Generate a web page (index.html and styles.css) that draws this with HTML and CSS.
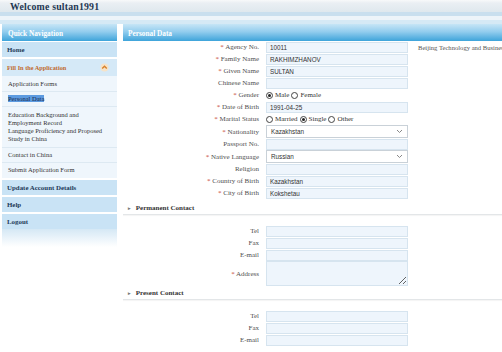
FILE: index.html
```html
<!DOCTYPE html>
<html lang="en">
<head>
    <meta charset="UTF-8">
    <meta name="viewport" content="width=device-width, initial-scale=1.0">
    <title>Personal Data</title>
    <link rel="stylesheet" href="styles.css">
</head>
<body>

    <div class="topbar">
        <span class="welcome">Welcome sultan1991</span>
    </div>

    <div class="layout">
        <aside class="sidebar">
            <div class="side-head">Quick Navigation</div>
            <div class="nav-item">Home</div>
            <div class="nav-item nav-open">
                <span>Fill In the Application</span>
                <svg class="collapse-icon" width="9" height="9" viewBox="0 0 9 9">
                    <circle cx="4.5" cy="4.5" r="4" fill="#f6e3c8"/>
                    <polyline points="2.2,5.6 4.5,3.2 6.8,5.6" fill="none" stroke="#d9822b" stroke-width="1.4"/>
                </svg>
            </div>
            <ul class="sub-menu">
                <li>Application Forms</li>
                <li><span class="current">Personal Data</span></li>
                <li class="tight-top">Education Background and<br>Employment Record</li>
                <li class="tight-bottom">Language Proficiency and Proposed<br>Study in China</li>
                <li>Contact in China</li>
                <li class="last">Submit Application Form</li>
            </ul>
            <div class="nav-item">Update Account Details</div>
            <div class="nav-item">Help</div>
            <div class="nav-item">Logout</div>
            <div class="side-foot"></div>
        </aside>

        <main class="content">
            <div class="main-head">Personal Data</div>

            <div class="form-grid personal">
                <div class="info">Beijing Technology and Business University</div>

                <label class="label"><em>*</em> Agency No.</label>
                <input class="field" type="text" value="10011">
                <label class="label"><em>*</em> Family Name</label>
                <input class="field" type="text" value="RAKHIMZHANOV">
                <label class="label"><em>*</em> Given Name</label>
                <input class="field" type="text" value="SULTAN">
                <label class="label">Chinese Name</label>
                <input class="field" type="text" value="">
                <label class="label"><em>*</em> Gender</label>
                <div class="field radios">
                    <span class="radio checked"></span>Male
                    <span class="radio"></span>Female
                </div>
                <label class="label"><em>*</em> Date of Birth</label>
                <input class="field" type="text" value="1991-04-25">
                <label class="label"><em>*</em> Marital Status</label>
                <div class="field radios">
                    <span class="radio"></span>Married
                    <span class="radio checked"></span>Single
                    <span class="radio"></span>Other
                </div>
                <label class="label"><em>*</em> Nationality</label>
                <div class="field select">
                    <span>Kazakhstan</span>
                    <svg width="7" height="5" viewBox="0 0 7 5"><polyline points="1,1 3.5,3.5 6,1" fill="none" stroke="#888" stroke-width="1"/></svg>
                </div>
                <label class="label">Passport No.</label>
                <input class="field" type="text" value="">
                <label class="label"><em>*</em> Native Language</label>
                <div class="field select">
                    <span>Russian</span>
                    <svg width="7" height="5" viewBox="0 0 7 5"><polyline points="1,1 3.5,3.5 6,1" fill="none" stroke="#888" stroke-width="1"/></svg>
                </div>
                <label class="label">Religion</label>
                <input class="field" type="text" value="">
                <label class="label"><em>*</em> Country of Birth</label>
                <input class="field" type="text" value="Kazakhstan">
                <label class="label"><em>*</em> City of Birth</label>
                <input class="field" type="text" value="Kokshetau">
            </div>

            <div class="section-title"><span class="bullet">&#9656;</span> Permanent Contact</div>
            <div class="form-grid contact with-address">
                <label class="label">Tel</label>
                <input class="field" type="text">
                <label class="label">Fax</label>
                <input class="field" type="text">
                <label class="label">E-mail</label>
                <input class="field" type="text">
                <label class="label"><em>*</em> Address</label>
                <textarea class="field area"></textarea>
            </div>

            <div class="section-title"><span class="bullet">&#9656;</span> Present Contact</div>
            <div class="form-grid contact">
                <label class="label">Tel</label>
                <input class="field" type="text">
                <label class="label">Fax</label>
                <input class="field" type="text">
                <label class="label">E-mail</label>
                <input class="field" type="text">
            </div>
        </main>
    </div>

</body>
</html>
```

FILE: styles.css
```css
html, body {
    overflow: hidden;
}
body {
    margin: 0;
    height: 352px;
    font-family: "Liberation Serif", "Times New Roman", serif;
    font-size: 7px;
    color: #444;
    background: #fff;
}
.topbar {
    height: 24px;
    background: linear-gradient(#f8f9fa 0, #eaeff3 3px, #dfe8ee 12px, #c9dfee 12px, #c9dfee 16px, #edf4f9 16px, #edf4f9 20px, #d5e9f5 20px, #d5e9f5 24px);
}
.welcome {
    display: inline-block;
    padding: 1px 0 0 10px;
    font-size: 9.8px;
    font-weight: bold;
    color: #1f3853;
    letter-spacing: 0.2px;
}
.layout {
    display: flex;
    align-items: flex-start;
}

/* sidebar */
.sidebar {
    width: 115px;
    margin-left: 2px;
    flex-shrink: 0;
}
.side-head,
.main-head {
    height: 17px;
    line-height: 19px;
    padding-left: 6px;
    font-size: 7.3px;
    font-weight: bold;
    color: #fff;
    background: linear-gradient(#c6e5f6, #93cdee 45%, #3ea4da);
}
.nav-item {
    height: 15px;
    line-height: 15px;
    margin-top: 2px;
    padding-left: 5px;
    font-size: 6.9px;
    font-weight: bold;
    color: #1d3a58;
    background: #c9e3f5;
}
.side-head + .nav-item {
    margin-top: 1px;
}
.nav-open {
    height: 17px;
    line-height: 17px;
    display: flex;
    align-items: center;
    justify-content: space-between;
    padding-right: 8px;
    font-size: 6.3px;
    color: #bf6a2e;
    background: #d5e9f7;
}
.sub-menu {
    list-style: none;
    margin: 0;
    padding: 0 0 1px;
    background: #eff6fc;
}
.sub-menu li {
    padding: 3px 0 3px 6px;
    line-height: 8px;
    height: 8px;
    border-bottom: 1px solid #dde9f2;
    color: #333;
    font-size: 6.5px;
    white-space: nowrap;
}
.sub-menu li:first-child {
    padding-top: 4px;
}
.sub-menu li.tight-top {
    height: 16px;
    padding: 4px 0 0 6px;
    border-bottom: none;
}
.sub-menu li.tight-bottom {
    height: 16px;
    padding: 0 0 4px 6px;
}
.sub-menu li.last {
    border-bottom: none;
}
.current {
    background: #5d9be0;
    color: #15264a;
}
.side-foot {
    height: 18px;
    background: linear-gradient(#d5e8f5, #fff);
}

/* main */
.content {
    flex: 1;
    min-width: 0;
    margin-left: 6px;
    overflow: hidden;
}
.main-head {
    padding-left: 5px;
}
.form-grid {
    display: grid;
    grid-template-columns: 136px 142px 1fr;
    column-gap: 7px;
    align-items: center;
}
.personal {
    grid-template-rows: repeat(7, 12px) 13px 12px 13px repeat(3, 12px);
}
.contact {
    grid-auto-rows: 12px;
    margin-top: 10px;
}
.with-address {
    grid-template-rows: 12px 12px 12px 25px;
}
.label {
    grid-column: 1;
    text-align: right;
    color: #505050;
    white-space: nowrap;
}
.label em {
    font-style: normal;
    color: #c84a3a;
}
.field {
    grid-column: 2;
    box-sizing: border-box;
    width: 142px;
    height: 11px;
    margin: 0;
    padding: 0 0 0 3px;
    border: 1px solid #d6e4ef;
    background: #eef5fc;
    font-family: "Liberation Sans", Arial, sans-serif;
    font-size: 6.3px;
    color: #333;
    outline: none;
}
.info {
    grid-column: 3;
    grid-row: 1;
    margin-left: 3px;
    white-space: nowrap;
    font-size: 6.6px;
    color: #555;
}
.radios {
    display: flex;
    align-items: center;
    padding: 0;
    border: none;
    background: none;
    font-family: "Liberation Serif", "Times New Roman", serif;
    font-size: 7px;
}
.radio {
    box-sizing: border-box;
    width: 7px;
    height: 7px;
    margin: 0 2px 0 2px;
    border: 1px solid #444;
    border-radius: 50%;
    background: #fff;
    display: flex;
    align-items: center;
    justify-content: center;
}
.radio:first-child {
    margin-left: 0;
}
.radio.checked::after {
    content: "";
    width: 3px;
    height: 3px;
    border-radius: 50%;
    background: #222;
}
.select {
    height: 13px;
    display: flex;
    align-items: center;
    justify-content: space-between;
    padding: 0 4px;
    border: 1px solid #c9d1d8;
    background: #fff;
}
.area {
    height: 25px;
    align-self: start;
    resize: vertical;
}
.section-title {
    height: 12px;
    line-height: 12px;
    margin-top: 3px;
    padding-left: 5px;
    font-weight: bold;
    color: #333;
    border-bottom: 1px solid #e3e6e8;
    box-shadow: 0 1px 1px rgba(0, 0, 0, 0.04);
}
.contact + .section-title {
    margin-top: 1px;
}
.bullet {
    font-size: 5px;
    color: #777;
    margin-right: 3px;
}
```
